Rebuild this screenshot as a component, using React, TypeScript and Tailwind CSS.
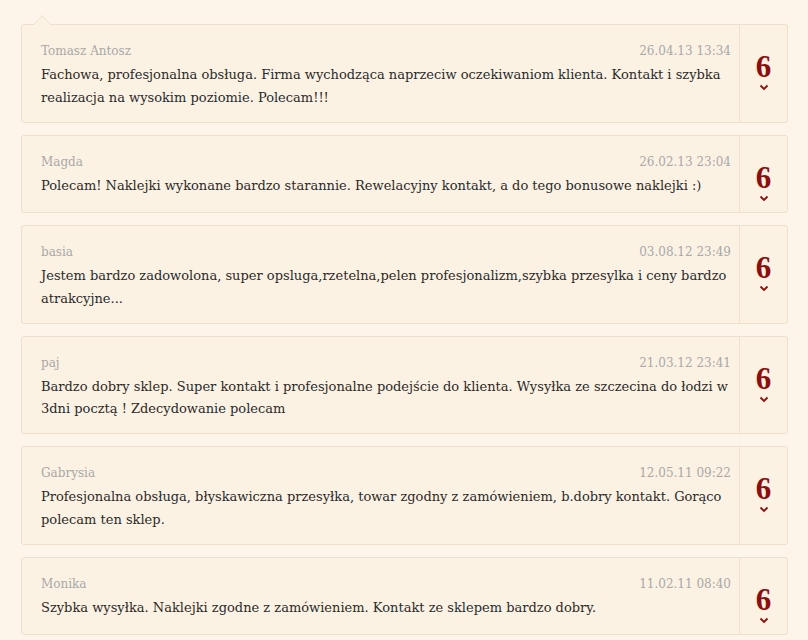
import React from 'react';

type Review = { name: string; date: string; text: string; score: number };

const reviews: Review[] = [
  {
    name: 'Tomasz Antosz',
    date: '26.04.13 13:34',
    text: 'Fachowa, profesjonalna obsługa. Firma wychodząca naprzeciw oczekiwaniom klienta. Kontakt i szybka realizacja na wysokim poziomie. Polecam!!!',
    score: 6,
  },
  {
    name: 'Magda',
    date: '26.02.13 23:04',
    text: 'Polecam! Naklejki wykonane bardzo starannie. Rewelacyjny kontakt, a do tego bonusowe naklejki :)',
    score: 6,
  },
  {
    name: 'basia',
    date: '03.08.12 23:49',
    text: 'Jestem bardzo zadowolona, super opsluga,rzetelna,pelen profesjonalizm,szybka przesylka i ceny bardzo atrakcyjne...',
    score: 6,
  },
  {
    name: 'paj',
    date: '21.03.12 23:41',
    text: 'Bardzo dobry sklep. Super kontakt i profesjonalne podejście do klienta. Wysyłka ze szczecina do łodzi w 3dni pocztą ! Zdecydowanie polecam',
    score: 6,
  },
  {
    name: 'Gabrysia',
    date: '12.05.11 09:22',
    text: 'Profesjonalna obsługa, błyskawiczna przesyłka, towar zgodny z zamówieniem, b.dobry kontakt. Gorąco polecam ten sklep.',
    score: 6,
  },
  {
    name: 'Monika',
    date: '11.02.11 08:40',
    text: 'Szybka wysyłka. Naklejki zgodne z zamówieniem. Kontakt ze sklepem bardzo dobry.',
    score: 6,
  },
];

const ReviewCard: React.FC<{ review: Review; first?: boolean }> = ({ review, first }) => (
  <div className="relative flex min-h-[78px] rounded-[3px] border border-[#efe0cc] bg-[#fcf2e3]">
    {first && (
      <div className="absolute -top-[10px] left-[11px] h-0 w-0 border-x-[9px] border-b-[10px] border-x-transparent border-b-[#efe0cc]">
        <div className="absolute left-[-8px] top-[1px] h-0 w-0 border-x-[8px] border-b-[9px] border-x-transparent border-b-[#fcf2e3]" />
      </div>
    )}
    <div className="flex-1 pl-[19px] pr-[8px] pt-[17px] pb-[12.25px]">
      <div className="flex items-baseline justify-between text-[12px] leading-[18px] text-[#a8a8a8]">
        <span>{review.name}</span>
        <span>{review.date}</span>
      </div>
      <p className="mt-[4px] text-[13px] leading-[22.75px] text-[#2a2a2a]">{review.text}</p>
    </div>
    <div className="flex w-[48px] shrink-0 flex-col items-center border-l border-[#efe0cc] pt-[27px]">
      <span
        className="text-[31px] font-bold leading-[30px] text-[#8e0d0d]"
        style={{ fontFamily: '"Liberation Serif", serif' }}
      >
        {review.score}
      </span>
      <svg width="10" height="7" viewBox="0 0 10 7" className="mt-[2px]">
        <polyline points="1.5,1.5 5,5 8.5,1.5" fill="none" stroke="#8e0d0d" strokeWidth="1.8" />
      </svg>
    </div>
  </div>
);

export default function App() {
  return (
    <div
      className="min-h-[640px] w-full bg-[#fdf5e9] pl-[21px] pr-[20px] pt-[24px]"
      style={{ fontFamily: '"DejaVu Serif", "Liberation Serif", serif' }}
    >
      <div className="flex flex-col gap-[12px]">
        {reviews.map((r, i) => (
          <ReviewCard key={i} review={r} first={i === 0} />
        ))}
      </div>
    </div>
  );
}
